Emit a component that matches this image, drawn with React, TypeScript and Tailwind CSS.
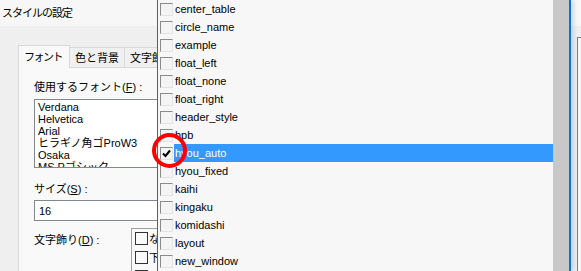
const items = [
  "center_table",
  "circle_name",
  "example",
  "float_left",
  "float_none",
  "float_right",
  "header_style",
  "hpb",
  "hyou_auto",
  "hyou_fixed",
  "kaihi",
  "kingaku",
  "komidashi",
  "layout",
  "new_window",
];

const fonts = ["Verdana", "Helvetica", "Arial", "ヒラギノ角ゴProW3", "Osaka", "MS Pゴシック"];

function Check() {
  return (
    <svg width="9" height="9" viewBox="0 0 9 9">
      <path d="M1 4.5 L3.5 7 L8 1.5" fill="none" stroke="#000" strokeWidth="2" />
    </svg>
  );
}

function Box({ checked }: { checked?: boolean }) {
  return (
    <span className="w-[13px] h-[13px] shrink-0 flex items-center justify-center bg-[#f4f4f4] border border-t-[#8a8a8a] border-l-[#8a8a8a] border-r-[#e3e3e3] border-b-[#e3e3e3]">
      {checked && <Check />}
    </span>
  );
}

export default function App() {
  return (
    <div className="relative w-[581px] h-[271px] overflow-hidden bg-[#efefef] font-['Liberation_Sans','Noto_Sans_CJK_JP',sans-serif] text-[11px] text-black leading-[12px]">
      {/* dialog behind */}
      <div className="flex flex-col h-full">
        <div className="h-[26px] shrink-0 bg-[#f7f7f7] pl-[2px] flex items-center tracking-[-1px]">スタイルの設定</div>
        <div className="flex-1 flex items-start pl-[18px]">
          <div className="w-[545px] shrink-0 pt-[18px] flex flex-col">
            <div className="flex items-end h-[23px]">
              <div className="w-[52px] h-[23px] -mb-px z-10 bg-[#f9f9f9] border border-b-0 border-[#d9d9d9] flex items-center justify-center tracking-[-1.5px] pr-[2px]">フォント</div>
              <div className="w-[55px] h-[20px] bg-[#f0f0f0] border border-b-0 border-l-0 border-[#d9d9d9] flex items-center justify-center">色と背景</div>
              <div className="w-[55px] h-[20px] bg-[#f0f0f0] border border-b-0 border-l-0 border-[#d9d9d9] flex items-center pl-[5px]">文字飾り</div>
            </div>
            <div className="h-[300px] bg-[#f9f9f9] border border-[#d9d9d9] pl-[15px] pt-[13px] flex flex-col">
              <div className="h-[12px]">使用するフォント(<span className="underline">F</span>) :</div>
              <div className="mt-[6px] w-[200px] h-[69px] bg-white border border-[#828790] pl-[3px] pt-[1px] overflow-hidden">
                {fonts.map((f) => (
                  <div key={f} className="h-[12px]">{f}</div>
                ))}
              </div>
              <div className="mt-[15px] h-[12px]">サイズ(<span className="underline">S</span>) :</div>
              <div className="mt-[5px] w-[200px] h-[21px] bg-white border border-[#828790] pl-[4px] flex items-center">16</div>
              <div className="mt-[7px] flex items-start">
                <div className="w-[97px] mt-[6px]">文字飾り(<span className="underline">D</span>) :</div>
                <div className="w-[80px] h-[60px] border border-[#a0a0a0] bg-[#f9f9f9] pl-[3px] pt-[3px] flex flex-col gap-[6px]">
                  <div className="flex items-center gap-[1px]">
                    <span className="w-[13px] h-[13px] border border-[#333]" />な
                  </div>
                  <div className="flex items-center gap-[1px]">
                    <span className="w-[13px] h-[13px] border border-[#333]" />下
                  </div>
                  <div className="flex items-center gap-[1px]">
                    <span className="w-[13px] h-[13px] border border-[#333]" />上
                  </div>
                </div>
              </div>
            </div>
          </div>
          <div className="ml-[14px] mt-[11px] w-[20px] h-[300px] shrink-0 border border-[#7a7f88] bg-[#f7f7f7]" />
        </div>
      </div>

      {/* dropdown popup */}
      <div className="absolute left-[157px] top-0 bottom-0 w-[414px] flex bg-[#f7f7f7] border-l border-r-2 border-[#0078d7] shadow-[3px_0_4px_rgba(0,0,0,0.12)]">
        <div className="flex-1 flex flex-col">
          {items.map((it) => {
            const sel = it === "hyou_auto";
            return (
              <div key={it} className="h-[18px] shrink-0 flex items-center pl-[2px]">
                <Box checked={sel} />
                <span className={`ml-[1px] flex-1 h-full flex items-center pl-[1px] ${sel ? "bg-[#3399ff] text-white" : ""}`}>{it}</span>
              </div>
            );
          })}
        </div>
        <div className="w-[16px] shrink-0 bg-[#c8c8c8]" />
      </div>

      {/* red annotation circle */}
      <div className="absolute left-[152px] top-[133px] w-[35px] h-[35px] rounded-full border-[4px] border-[#ff0000]" />
    </div>
  );
}
